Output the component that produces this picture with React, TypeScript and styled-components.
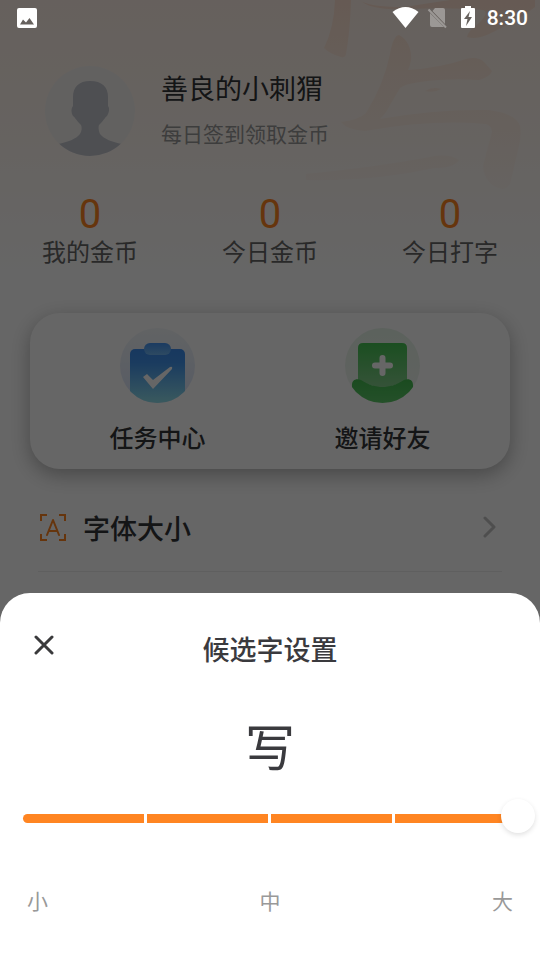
import React, { useState } from "react";
import styled, { createGlobalStyle } from "styled-components";

const GlobalStyle = createGlobalStyle`
  *, *::before, *::after { box-sizing: border-box; }
  body {
    margin: 0;
    background: #fff;
    font-family: Roboto, "Noto Sans CJK SC", sans-serif;
  }
  h1, h2, p, dl, dd, dt { margin: 0; font-weight: 400; }
  button { font: inherit; color: inherit; background: none; border: 0; padding: 0; cursor: pointer; }
  svg { display: block; flex: none; }
`;

const Screen = styled.div`
  position: relative;
  min-height: 100vh;
  overflow: hidden;
`;

const Page = styled.main`
  position: relative;
  min-height: 100vh;
  padding-top: 66px;
  background: linear-gradient(#fff1e8 0, #fff6ef 120px, #fff 280px);
`;

const Watermark = styled.svg`
  position: absolute;
  top: 0;
  right: 0;
`;

const Profile = styled.header`
  position: relative;
  display: flex;
  align-items: flex-start;
  gap: 26px;
  padding: 0 45px;
`;

const ProfileText = styled.div`
  display: flex;
  flex-direction: column;
  gap: 11px;
  padding-top: 4px;
`;

const Name = styled.h1`
  font-size: 27px;
  line-height: 40px;
  color: #333639;
`;

const Hint = styled.p`
  font-size: 21px;
  line-height: 28px;
  color: #999;
`;

const Stats = styled.dl`
  position: relative;
  display: grid;
  grid-template-columns: repeat(3, 1fr);
  padding-top: 39px;
  text-align: center;
`;

const Stat = styled.div`
  display: flex;
  flex-direction: column-reverse;
`;

const StatValue = styled.dd`
  font-size: 40px;
  line-height: 40px;
  color: #ff8522;
`;

const StatLabel = styled.dt`
  font-size: 24px;
  line-height: 36px;
  color: #666;
`;

const Card = styled.section`
  display: grid;
  grid-template-columns: 1fr 1fr;
  margin: 42px 30px 0;
  padding: 15px 15px 12px;
  border-radius: 30px;
  background: #fff;
  box-shadow: 0 6px 20px rgba(0, 0, 0, 0.3);
`;

const CardAction = styled.button`
  display: flex;
  flex-direction: column;
  align-items: center;
  gap: 18px;
  font-size: 24px;
  line-height: 36px;
  font-weight: 500;
  color: #333639;
`;

const SettingRow = styled.button`
  display: flex;
  align-items: center;
  width: calc(100% - 76px);
  margin: 14px 38px 0;
  padding: 0 6px 0 1px;
  height: 89px;
  border-bottom: 1px solid #eee;
  font-size: 27px;
  font-weight: 500;
  color: #333639;
`;

const SettingLabel = styled.span`
  flex: 1;
  padding-left: 17px;
  text-align: left;
`;

const Scrim = styled.div`
  position: absolute;
  inset: 0;
  background: rgba(0, 0, 0, 0.6);
`;

const StatusBar = styled.div`
  position: absolute;
  top: 0;
  left: 0;
  right: 0;
  display: flex;
  align-items: center;
  justify-content: space-between;
  height: 36px;
  padding: 0 12px 0 17px;
  color: #fff;
`;

const StatusGroup = styled.div`
  display: flex;
  align-items: center;
`;

const Clock = styled.time`
  padding-left: 11px;
  font-size: 21px;
  line-height: 36px;
  font-weight: 500;
`;

const Sheet = styled.section`
  position: absolute;
  left: 0;
  right: 0;
  bottom: 0;
  padding-bottom: 42px;
  border-radius: 30px 30px 0 0;
  background: #fff;
  color: #3a3a3e;
`;

const SheetHeader = styled.div`
  display: grid;
  grid-template-columns: 40px 1fr 40px;
  align-items: start;
  padding: 32px 24px 0;
`;

const CloseButton = styled.button`
  display: grid;
  place-items: center;
  width: 40px;
  height: 40px;
`;

const SheetTitle = styled.h2`
  padding-top: 6px;
  font-size: 27px;
  line-height: 40px;
  font-weight: 500;
  text-align: center;
`;

const Preview = styled.p`
  padding-top: 42px;
  font-size: 50px;
  line-height: 72px;
  text-align: center;
`;

const SliderBox = styled.div`
  position: relative;
  margin: 14px 5px 0 23px;
  height: 34px;
`;

const Segments = styled.div`
  display: flex;
  gap: 3px;
  padding: 15px 19px 0 0;
`;

const Segment = styled.span`
  flex: 1;
  height: 9px;
  background: #ff8522;
  &:first-child { border-radius: 5px 0 0 5px; }
`;

const Range = styled.input`
  position: absolute;
  inset: 0;
  width: 100%;
  height: 34px;
  margin: 0;
  appearance: none;
  background: transparent;
  cursor: pointer;
  &::-webkit-slider-runnable-track { height: 34px; background: transparent; }
  &::-webkit-slider-thumb {
    appearance: none;
    width: 34px;
    height: 34px;
    border-radius: 50%;
    background: #fff;
    box-shadow: 0 2px 5px rgba(0, 0, 0, 0.12);
  }
`;

const Scale = styled.div`
  display: flex;
  justify-content: space-between;
  padding: 53px 27px 0;
  font-size: 21px;
  line-height: 32px;
  color: #999;
`;

const CalligraphyMark = () => (
  <Watermark width="240" height="200" viewBox="300 0 240 200" aria-hidden="true">
    <defs>
      <linearGradient id="ink" gradientUnits="userSpaceOnUse" x1="0" y1="0" x2="0" y2="195">
        <stop offset="0" stopColor="#ff7a38" stopOpacity=".13" />
        <stop offset=".4" stopColor="#f89a58" stopOpacity=".09" />
        <stop offset="1" stopColor="#ff9a60" stopOpacity=".03" />
      </linearGradient>
    </defs>
    <g fill="url(#ink)">
      <path d="M335 0H351Q350 32 346 54Q345 58 341 57Q330 54 324 48Q334 28 335 0Z" />
      <path d="M360 0Q367 7 404 7L450 0H535V7Q520 19 489 34Q476 40 467 37Q467 32 479 23Q490 12 483 10Q450 7 411 9Q370 11 360 0Z" />
      <path d="M399 35C408 40 412 50 411 60Q410 66 408 70Q440 68 466 59Q478 56 484 62L492 71Q490 77 479 80Q447 78 420 82Q404 84 400 88L386 112Q382 117 380 119Q436 109 488 110Q515 113 520 126Q522 136 518 150L510 184Q504 194 490 183Q481 172 484 162L492 132Q492 126 486 124Q432 119 365 131Q347 130 341 122Q359 120 366 113Q384 84 390 54Q393 36 399 35Z" />
      <path d="M425 91Q433 86 441 89Q434 93 425 91Z" />
      <path d="M306 174Q370 168 430 157Q448 153 459 160Q454 168 434 168Q370 182 306 180Z" />
    </g>
  </Watermark>
);

const Avatar = () => (
  <svg width="90" height="90" viewBox="0 0 90 90" aria-label="头像" role="img">
    <defs>
      <clipPath id="avatarClip"><circle cx="45" cy="45" r="45" /></clipPath>
    </defs>
    <circle cx="45" cy="45" r="45" fill="#f6f3f0" />
    <path clipPath="url(#avatarClip)" fill="#c2c5ce" d="M45 15C57 15 63 21 63 31V40C65 42 64 47 62 50C60 51 60 53 54 59C53 61 54 66 55 68C59 73 67 76 77 78V90H13V78C23 76 31 73 35 68C37 65 37 61 36 59C30 53 30 51 28 50C26 47 26 42 28 40V31C28 21 34 15 45 15Z" />
  </svg>
);

const TaskIcon = () => (
  <svg width="75" height="75" viewBox="0 0 75 75" aria-hidden="true">
    <defs>
      <clipPath id="taskClip"><circle cx="37.5" cy="37.5" r="37.5" /></clipPath>
      <linearGradient id="taskBg" x1="0" y1="0" x2="0" y2="1">
        <stop offset="0" stopColor="#f4f8fb" />
        <stop offset="1" stopColor="#d9e3fa" />
      </linearGradient>
      <linearGradient id="taskBoard" x1="0" y1="0" x2="0" y2="1">
        <stop offset="0" stopColor="#3c8cee" />
        <stop offset=".25" stopColor="#4294ee" />
        <stop offset="1" stopColor="#92e0ec" />
      </linearGradient>
      <linearGradient id="taskClipTop" x1="0" y1="0" x2="0" y2="1">
        <stop offset="0" stopColor="#4494f2" />
        <stop offset="1" stopColor="#72b8f4" />
      </linearGradient>
    </defs>
    <circle cx="37.5" cy="37.5" r="37.5" fill="url(#taskBg)" />
    <rect clipPath="url(#taskClip)" x="10" y="21" width="55" height="54" rx="5" fill="url(#taskBoard)" />
    <rect x="24" y="15" width="27" height="12" rx="6" fill="url(#taskClipTop)" />
    <path d="M23 49 27 46 33 52 50 39Q53 38 52 41L33 61Z" fill="#fff" />
  </svg>
);

const InviteIcon = () => (
  <svg width="75" height="75" viewBox="0 0 75 75" aria-hidden="true">
    <defs>
      <clipPath id="inviteClip"><circle cx="37.5" cy="37.5" r="37.5" /></clipPath>
      <linearGradient id="inviteBg" x1="0" y1="0" x2="0" y2="1">
        <stop offset="0" stopColor="#e6f4e8" />
        <stop offset="1" stopColor="#f2f6f2" />
      </linearGradient>
      <linearGradient id="inviteBox" x1="0" y1="0" x2="0" y2="1">
        <stop offset="0" stopColor="#44c452" />
        <stop offset="1" stopColor="#88cf90" />
      </linearGradient>
      <linearGradient id="inviteHand" x1="0" y1="0" x2="0" y2="1">
        <stop offset="0" stopColor="#43bb50" />
        <stop offset="1" stopColor="#5cc868" />
      </linearGradient>
    </defs>
    <circle cx="37.5" cy="37.5" r="37.5" fill="url(#inviteBg)" />
    <path d="M18 15H57Q62 15 62 20V53L37.5 61 13 53V20Q13 15 18 15Z" fill="url(#inviteBox)" />
    <path d="M37.5 30V45M30 37.5H45" stroke="#fff" strokeWidth="6" strokeLinecap="round" />
    <path clipPath="url(#inviteClip)" d="M7 57C7 52 11 50 16 52C24 57 31 59 37.5 59C44 59 51 57 59 52C64 50 68 52 68 57V75H7Z" fill="url(#inviteHand)" />
  </svg>
);

const FontIcon = () => (
  <svg width="27" height="27" viewBox="0 0 27 27" fill="none" stroke="#ff8522" strokeWidth="2" aria-hidden="true">
    <path d="M2 7V1h6M20 1h6v6M26 20v6h-6M8 26H2v-6" />
    <path d="m8 21 6-15 6 15M10 17h8" strokeLinecap="round" strokeLinejoin="round" />
  </svg>
);

const ChevronIcon = () => (
  <svg width="14" height="24" viewBox="0 0 14 24" fill="none" stroke="#c4c4c4" strokeWidth="3" strokeLinecap="round" strokeLinejoin="round" aria-hidden="true">
    <path d="m3 3 9 9-9 9" />
  </svg>
);

const PictureIcon = () => (
  <svg width="20" height="20" viewBox="0 0 20 20" aria-hidden="true">
    <path fill="currentColor" fillRule="evenodd" d="M2 0h16q2 0 2 2v16q0 2-2 2H2q-2 0-2-2V2q0-2 2-2Zm1 16.500h14L12.500 10 9 14.500 6 11.500Z" />
  </svg>
);

const SignalIcons = () => (
  <svg width="84" height="24" viewBox="392 6 84 24" aria-hidden="true">
    <path fill="currentColor" d="M392.500 12Q405.500 2 418.500 12L405.500 28Z" />
    <g opacity=".35">
      <path fill="currentColor" d="M435 8H443Q445 8 445 10V24L432.500 11ZM430 13 444 27H432Q430 27 430 25Z" />
      <path d="M428.500 9.500 446 27.500" stroke="currentColor" strokeWidth="2" />
    </g>
    <path fill="currentColor" fillRule="evenodd" d="M465 6h6v2h3q1 0 1 1v18q0 1-1 1h-12q-1 0-1-1V9q0-1 1-1h3ZM470 11 464 19H467.500L466 26 472 17H468.500Z" />
  </svg>
);

const CloseIcon = () => (
  <svg width="20" height="20" viewBox="0 0 20 20" fill="none" stroke="#3a3a3c" strokeWidth="3" strokeLinecap="round" aria-hidden="true">
    <path d="m2 2 16 16M18 2 2 18" />
  </svg>
);

const stats = ["我的金币", "今日金币", "今日打字"];

export default function App() {
  const [size, setSize] = useState(4);
  return (
    <>
      <GlobalStyle />
      <Screen>
        <Page>
          <CalligraphyMark />
          <Profile>
            <Avatar />
            <ProfileText>
              <Name>善良的小刺猬</Name>
              <Hint>每日签到领取金币</Hint>
            </ProfileText>
          </Profile>
          <Stats>
            {stats.map((label) => (
              <Stat key={label}>
                <StatLabel>{label}</StatLabel>
                <StatValue>0</StatValue>
              </Stat>
            ))}
          </Stats>
          <Card>
            <CardAction type="button"><TaskIcon />任务中心</CardAction>
            <CardAction type="button"><InviteIcon />邀请好友</CardAction>
          </Card>
          <SettingRow type="button">
            <FontIcon />
            <SettingLabel>字体大小</SettingLabel>
            <ChevronIcon />
          </SettingRow>
        </Page>
        <Scrim />
        <StatusBar>
          <PictureIcon />
          <StatusGroup>
            <SignalIcons />
            <Clock>8:30</Clock>
          </StatusGroup>
        </StatusBar>
        <Sheet role="dialog" aria-labelledby="sheet-title">
          <SheetHeader>
            <CloseButton type="button" aria-label="关闭"><CloseIcon /></CloseButton>
            <SheetTitle id="sheet-title">候选字设置</SheetTitle>
          </SheetHeader>
          <Preview>写</Preview>
          <SliderBox>
            <Segments>
              <Segment /><Segment /><Segment /><Segment />
            </Segments>
            <Range
              type="range"
              min={0}
              max={4}
              step={1}
              value={size}
              aria-labelledby="sheet-title"
              onChange={(e) => setSize(Number(e.target.value))}
            />
          </SliderBox>
          <Scale>
            <span>小</span>
            <span>中</span>
            <span>大</span>
          </Scale>
        </Sheet>
      </Screen>
    </>
  );
}
